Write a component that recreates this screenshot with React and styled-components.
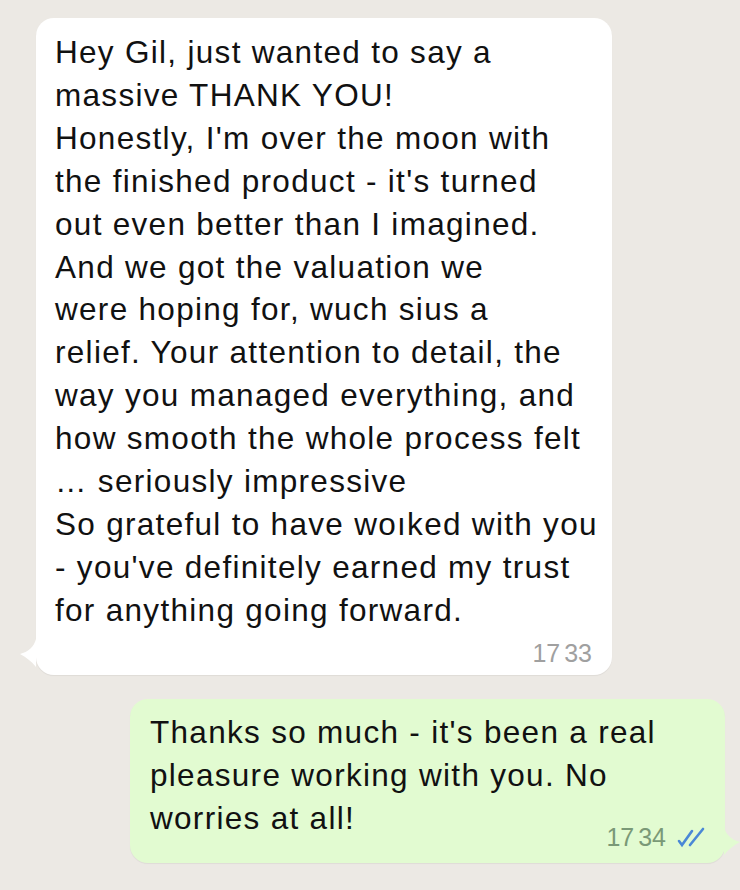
import React from 'react';
import styled, { createGlobalStyle } from 'styled-components';

const colors = {
  wallpaper: '#ece9e4',
  incoming: '#ffffff',
  outgoing: '#e2fbd1',
  text: '#111111',
  timeIn: '#a0a0a0',
  timeOut: '#7a9977',
  tick: '#4a88d6',
};

const GlobalStyle = createGlobalStyle`
  html, body {
    margin: 0;
    padding: 0;
    background: ${colors.wallpaper};
  }
  body {
    font-family: "Liberation Sans", Arial, sans-serif;
    -webkit-font-smoothing: antialiased;
  }
`;

const Chat = styled.div`
  width: 740px;
  height: 890px;
  overflow: hidden;
  padding-top: 18px;
  box-sizing: border-box;
  display: flex;
  flex-direction: column;
  gap: 24px;
`;

const Bubble = styled.div`
  position: relative;
  box-sizing: border-box;
  background: ${(p) => (p.out ? colors.outgoing : colors.incoming)};
  border-radius: 18px;
  margin-left: ${(p) => (p.out ? '130px' : '36px')};
  width: ${(p) => (p.out ? '595px' : '576px')};
  padding: ${(p) => (p.out ? '12px 18px 10px 20px' : '13px 20px 5px 19px')};
  box-shadow: 0 1px 1px rgba(0, 0, 0, 0.06);
`;

const Line = styled.div`
  width: fit-content;
  font-size: 31.5px;
  line-height: 42.9px;
  color: ${colors.text};
  white-space: pre;
  letter-spacing: 1.3px;
`;

const Meta = styled.div`
  display: flex;
  justify-content: flex-end;
  align-items: center;
  gap: 11px;
  margin-top: ${(p) => (p.out ? '-18px' : '6px')};
  height: 32px;
`;

const Time = styled.span`
  font-size: 25px;
  color: ${(p) => (p.out ? colors.timeOut : colors.timeIn)};
  word-spacing: -3px;
`;

const Tail = styled.svg`
  position: absolute;
  bottom: 8px;
  ${(p) => (p.out ? 'right: -15px;' : 'left: -16px;')}
  width: 16px;
  height: 28px;
`;

const Ticks = () => (
  <svg width="30" height="22" viewBox="0 0 30 22" fill="none" stroke={colors.tick} strokeWidth="2.6" strokeLinecap="round">
    <polyline points="2,15 5,19 15,5" />
    <line x1="13" y1="19" x2="26" y2="3" />
  </svg>
);

const incoming = [
  'Hey Gil, just wanted to say a',
  'massive THANK YOU!',
  "Honestly, I'm over the moon with",
  "the finished product - it's turned",
  'out even better than I imagined.',
  'And we got the valuation we',
  'were hoping for, wuch sius a',
  'relief. Your attention to detail, the',
  'way you managed everything, and',
  'how smooth the whole process felt',
  '… seriously impressive',
  'So grateful to have woıked with you',
  "- you've definitely earned my trust",
  'for anything going forward.',
];

const outgoing = [
  "Thanks so much - it's been a real",
  'pleasure working with you. No',
  'worries at all!',
];

export default function App() {
  return (
    <>
      <GlobalStyle />
      <Chat>
        <Bubble>
          <Tail viewBox="0 0 16 28">
            <path d="M16 0 C14 8 8 13 0 15 C6 18 11 22 16 28 Z" fill={colors.incoming} />
          </Tail>
          {incoming.map((t) => (
            <Line key={t}>{t}</Line>
          ))}
          <Meta>
            <Time>17 33</Time>
          </Meta>
        </Bubble>
        <Bubble out>
          <Tail out viewBox="0 0 16 28">
            <path d="M0 0 C2 8 8 13 16 15 C10 18 5 22 0 28 Z" fill={colors.outgoing} />
          </Tail>
          {outgoing.map((t) => (
            <Line key={t}>{t}</Line>
          ))}
          <Meta out>
            <Time out>17 34</Time>
            <Ticks />
          </Meta>
        </Bubble>
      </Chat>
    </>
  );
}
